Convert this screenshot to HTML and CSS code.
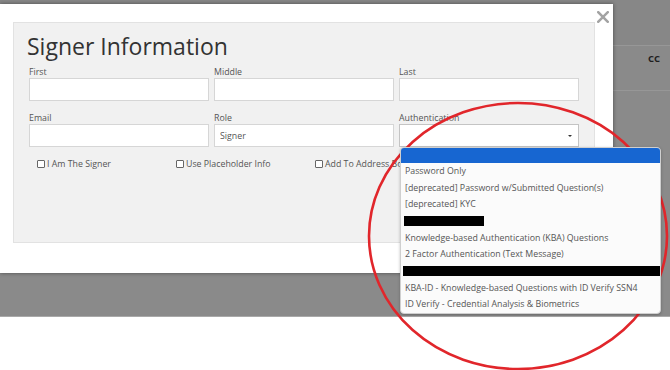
FILE: index.html
```html
<!DOCTYPE html>
<html lang="en">
<head>
    <meta charset="UTF-8">
    <meta name="viewport" content="width=device-width, initial-scale=1.0">
    <title>Signer Information</title>
    <link rel="stylesheet" href="styles.css">
</head>
<body>
    <div class="screen">
        <!-- Page behind the modal backdrop -->
        <div class="backdrop">
            <div class="page-top"></div>
            <div class="table-head">
                <span class="col-cc">CC</span>
            </div>
        </div>

        <!-- Signer modal -->
        <div class="modal">
            <button class="modal-close" aria-label="Close">
                <svg width="12" height="12" viewBox="0 0 12 12">
                    <path d="M1.2 1.2 L10.8 10.8 M10.8 1.2 L1.2 10.8" stroke="#a3a3a3" stroke-width="2.5" stroke-linecap="square" fill="none"/>
                </svg>
            </button>

            <div class="panel">
                <h2 class="panel-title">Signer Information</h2>

                <div class="field-grid">
                    <div class="field">
                        <label>First</label>
                        <input type="text" class="text-input">
                    </div>
                    <div class="field">
                        <label>Middle</label>
                        <input type="text" class="text-input">
                    </div>
                    <div class="field">
                        <label>Last</label>
                        <input type="text" class="text-input">
                    </div>
                    <div class="field">
                        <label>Email</label>
                        <input type="text" class="text-input">
                    </div>
                    <div class="field">
                        <label>Role</label>
                        <input type="text" class="text-input" value="Signer">
                    </div>
                    <div class="field auth-field">
                        <label>Authentication</label>
                        <div class="select-box"><span class="select-arrow"></span></div>

                        <ul class="dropdown">
                            <li class="dropdown-item selected"></li>
                            <li class="dropdown-item">Password Only</li>
                            <li class="dropdown-item">[deprecated] Password w/Submitted Question(s)</li>
                            <li class="dropdown-item">[deprecated] KYC</li>
                            <li class="dropdown-item"><span class="redacted short"></span></li>
                            <li class="dropdown-item">Knowledge-based Authentication (KBA) Questions</li>
                            <li class="dropdown-item">2 Factor Authentication (Text Message)</li>
                            <li class="dropdown-item"><span class="redacted long"></span></li>
                            <li class="dropdown-item">KBA-ID - Knowledge-based Questions with ID Verify SSN4</li>
                            <li class="dropdown-item">ID Verify - Credential Analysis &amp; Biometrics</li>
                        </ul>
                    </div>
                </div>

                <div class="check-row">
                    <label class="check"><input type="checkbox">I Am The Signer</label>
                    <label class="check"><input type="checkbox">Use Placeholder Info</label>
                    <label class="check"><input type="checkbox">Add To Address Book</label>
                </div>
            </div>
        </div>

        <!-- Red annotation circle -->
        <svg class="annotation" width="670" height="370" viewBox="0 0 670 370">
            <ellipse cx="518" cy="236" rx="149" ry="133" fill="none" stroke="#e1262b" stroke-width="2.6"/>
        </svg>
    </div>
</body>
</html>
```

FILE: styles.css
```css
* {
    box-sizing: border-box;
}

body {
    margin: 0;
    background: #fff;
    font-family: "Open Sans", "DejaVu Sans", sans-serif;
    color: #555;
}

.screen {
    position: relative;
    width: 670px;
    height: 370px;
    overflow: hidden;
    background: #fff;
}

.backdrop {
    height: 317px;
    background: #8a8a8a;
    border-bottom: 1px solid #a9a9a9;
}

.page-top {
    height: 45px;
    background: #878787;
}

.table-head {
    height: 46px;
    border-top: 1px solid #979797;
    border-bottom: 1px solid #979797;
    display: flex;
    justify-content: flex-end;
    align-items: flex-start;
    padding: 6px 10px 0 0;
}

.col-cc {
    font-size: 9.5px;
    font-weight: 700;
    color: #1e1e1e;
}

.modal {
    position: absolute;
    top: 4px;
    left: 0;
    width: 613px;
    height: 269px;
    background: #fff;
    padding: 18px 18px 0 13px;
    box-shadow: 0 0 4px rgba(0, 0, 0, 0.45);
}

.modal-close {
    position: absolute;
    top: 7px;
    right: 4px;
    width: 12px;
    height: 12px;
    padding: 0;
    border: none;
    background: none;
    display: flex;
}

.panel {
    height: 221px;
    background: #f1f1f1;
    border: 1px solid #e2e2e2;
    padding: 8px 15px 0 15px;
}

.panel-title {
    margin: 0 0 5px -2px;
    font-size: 23px;
    line-height: 31px;
    font-weight: 400;
    color: #333;
}

.field-grid {
    display: grid;
    grid-template-columns: 180px 180px 180px;
    column-gap: 5px;
    row-gap: 12px;
}

.field {
    display: flex;
    flex-direction: column;
}

.field label {
    font-size: 8.8px;
    line-height: 11px;
    color: #555;
}

.text-input {
    height: 23px;
    border: 1px solid #d6d6d6;
    background: #fff;
    padding: 0 5px;
    font-family: inherit;
    font-size: 8.8px;
    color: #555;
    outline: none;
}

.auth-field {
    position: relative;
}

.select-box {
    height: 23px;
    border: 1px solid #c4c4c4;
    background: #fff;
    display: flex;
    justify-content: flex-end;
    align-items: center;
    padding-right: 6px;
}

.select-arrow {
    width: 0;
    height: 0;
    border-left: 2px solid transparent;
    border-right: 2px solid transparent;
    border-top: 2.5px solid #333;
}

.dropdown {
    position: absolute;
    top: 34px;
    left: 1px;
    width: 261px;
    margin: 0;
    padding: 0;
    list-style: none;
    background: #fbfbfb;
    border: 1px solid #cfcfcf;
    border-radius: 4px;
    overflow: hidden;
    box-shadow: 0 1px 3px rgba(0, 0, 0, 0.25);
    z-index: 5;
}

.dropdown-item {
    height: 16.7px;
    padding-left: 4px;
    font-size: 8.8px;
    color: #555;
    white-space: nowrap;
    display: flex;
    align-items: center;
}

.dropdown-item.selected {
    height: 14.5px;
    background: #1766d1;
}

.redacted {
    display: block;
    height: 10px;
    background: #000;
}

.redacted.short {
    width: 80px;
    margin-left: -1px;
}

.redacted.long {
    width: 258px;
    margin-left: -2px;
}

.check-row {
    display: grid;
    grid-template-columns: 139px 139px auto;
    margin-top: 11px;
    padding-left: 8px;
}

.check {
    display: flex;
    align-items: center;
    font-size: 8.8px;
    line-height: 12px;
    color: #555;
    white-space: nowrap;
}

.check input {
    appearance: none;
    width: 8px;
    height: 8px;
    margin: 0 2px 0 0;
    border: 1px solid #666;
    border-radius: 1px;
    background: #fff;
}

.annotation {
    position: absolute;
    top: 0;
    left: 0;
    pointer-events: none;
}
```
